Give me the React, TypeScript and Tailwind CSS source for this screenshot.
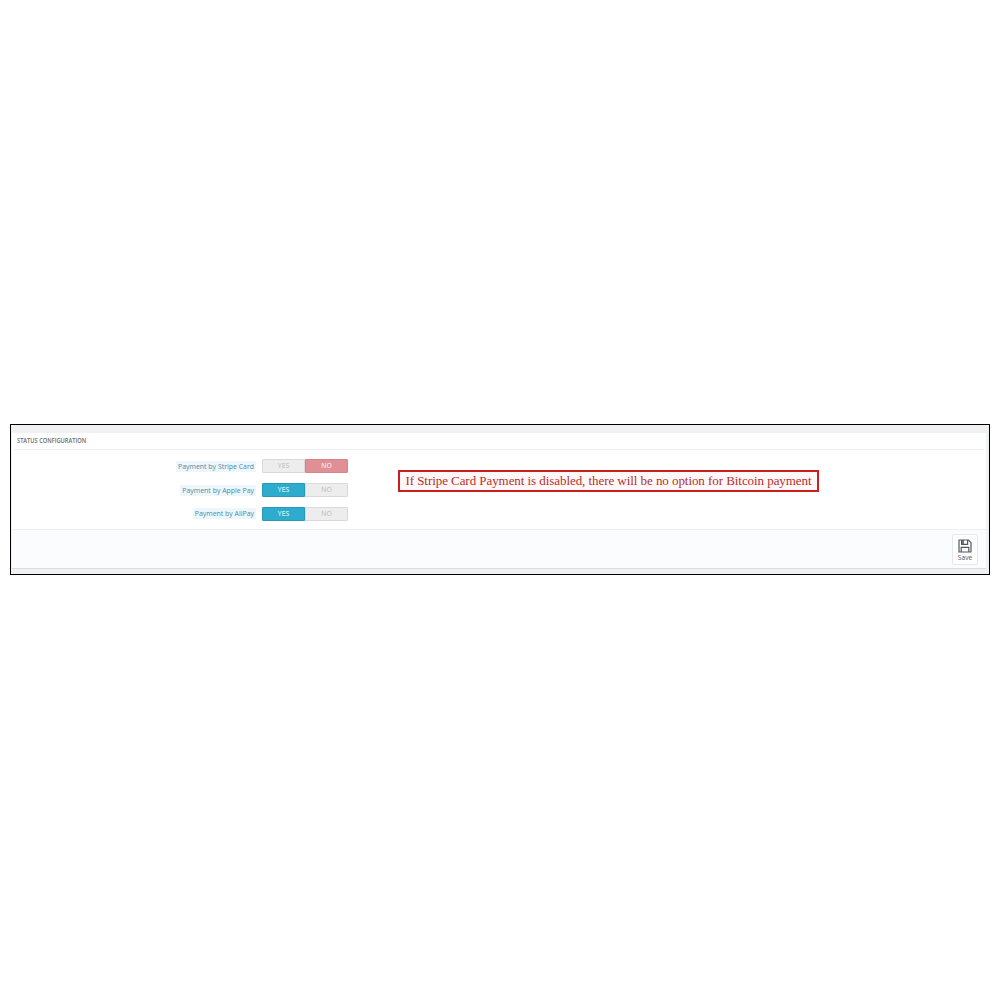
const rows = [
  { label: 'Payment by Stripe Card', on: false },
  { label: 'Payment by Apple Pay', on: true },
  { label: 'Payment by AliPay', on: true },
];

function Toggle({ on }: { on: boolean }) {
  const idle = 'border border-[#d9d9d9] bg-[#ededed] text-[#b8b8b8]';
  return (
    <div className="flex h-[14px] w-[86px] text-[6.8px] leading-none">
      <div
        className={`flex w-[43px] items-center justify-center rounded-l-[1px] pt-px ${
          on ? 'border border-[#2798b5] bg-[#2eacce] text-white' : idle
        }`}
      >
        YES
      </div>
      <div
        className={`flex w-[43px] items-center justify-center rounded-r-[1px] pt-px ${
          on ? idle : 'border border-[#d3868a] bg-[#e08f95] text-white'
        }`}
      >
        NO
      </div>
    </div>
  );
}

function SaveIcon() {
  return (
    <svg className="shrink-0" width="14" height="14" viewBox="0 0 14 14" fill="none" stroke="#55585b" strokeWidth="1.2">
      <path d="M1 1h9.4L13 3.6V13H1z" strokeLinejoin="round" />
      <path d="M3.6 1v4.4h6V1M3.2 13V8.3h7.6V13" />
      <path d="M5 1v4.2" strokeWidth="1.6" />
    </svg>
  );
}

export default function App() {
  return (
    <div className="flex h-[1000px] w-[1000px] flex-col bg-white px-[10px] pt-[424px] font-['Open_Sans',sans-serif]">
      <div className="h-[151px] w-[980px] border border-black bg-[#eff1f2] pt-[8px] pr-[3px] pl-px">
        <div className="flex h-[136px] flex-col border-b border-[#d9dde0] bg-white">
          <div className="mx-[2px] flex h-[17px] shrink-0 items-center border-b border-[#f1f1f1] pl-[3px]">
            <span className="inline-block origin-left scale-x-[0.77] whitespace-nowrap text-[7.4px] font-semibold leading-none text-[#6a6a6a]">
              STATUS CONFIGURATION
            </span>
          </div>
          <div className="flex h-[80px] shrink-0 border-b border-[#eeeff0]">
            <div className="flex w-[336px] flex-col gap-[9.7px] pt-[9.4px]">
              {rows.map((row) => (
                <div key={row.label} className="flex h-[14px] items-center justify-end gap-[6px]">
                  <span className="whitespace-nowrap bg-[#edf7fb] px-[2px] text-[6.95px] leading-[11px] text-[#4a8ba5]">
                    {row.label}
                  </span>
                  <Toggle on={row.on} />
                </div>
              ))}
            </div>
            <div className="mt-[20px] ml-[50px] flex h-[22px] w-[421px] items-center justify-center border-2 border-[#c9201f] bg-[#fff8f7] pb-[2px] font-['Liberation_Serif',serif] text-[13px] leading-none tracking-[-0.06px] whitespace-nowrap text-[#b3302f]">
              If Stripe Card Payment is disabled, there will be no option for Bitcoin payment
            </div>
          </div>
          <div className="flex flex-1 justify-end bg-[#fbfcfe] pt-[4px] pr-[8px]">
            <button className="flex h-[31px] w-[26px] flex-col items-center rounded-[2px] border border-[#e6e8ea] bg-white pt-[4px] text-[6.6px] leading-none text-[#555]">
              <SaveIcon />
              <span className="mt-[2px]">Save</span>
            </button>
          </div>
        </div>
      </div>
    </div>
  );
}
